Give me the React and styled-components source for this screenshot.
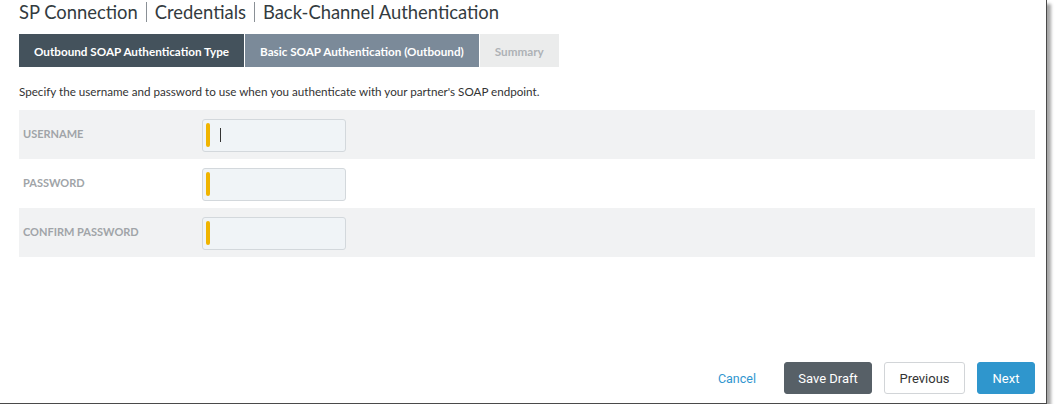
import React from "react";
import styled, { createGlobalStyle } from "styled-components";

const GlobalStyle = createGlobalStyle`
  body {
    margin: 0;
    background: #ffffff;
    font-family: "Lato", "Liberation Sans", sans-serif;
  }
`;

const Frame = styled.div`
  width: 1047px;
  height: 404px;
  box-sizing: border-box;
  background: #ffffff;
  border-right: 1px solid #4a4a4a;
  border-bottom: 1px solid #4a4a4a;
  box-shadow: 4px 4px 3px rgba(0, 0, 0, 0.35);
  display: flex;
  flex-direction: column;
  padding: 0 11px 0 19px;
`;

const Title = styled.h1`
  margin: 0;
  font-size: 18.4px;
  font-weight: 400;
  color: #333b40;
  line-height: 24px;
  display: flex;
  align-items: center;
`;

const Divider = styled.span`
  display: inline-block;
  width: 1px;
  height: 20px;
  background: #8a9096;
  margin: 0 8px;
`;

const Tabs = styled.div`
  display: flex;
  margin-top: 10px;
  gap: 1px;
`;

const Tab = styled.div`
  height: 33px;
  display: flex;
  align-items: center;
  padding: 0 15px;
  font-size: 11.7px;
  font-weight: 700;
  color: ${(p) => (p.state === "next" ? "#aeb2b6" : "#ffffff")};
  background: ${(p) =>
    p.state === "done" ? "#44525c" : p.state === "active" ? "#7b8a99" : "#ebecec"};
`;

const Intro = styled.p`
  margin: 17px 0 10px 0;
  font-size: 11.65px;
  color: #333333;
  line-height: 16px;
`;

const Form = styled.div`
  display: flex;
  flex-direction: column;
`;

const Row = styled.div`
  height: 49px;
  display: flex;
  align-items: center;
  background: ${(p) => (p.shaded ? "#f1f2f3" : "#ffffff")};
`;

const Label = styled.div`
  width: 179px;
  padding-left: 4px;
  font-size: 11px;
  font-weight: 700;
  color: #a0a4a8;
  margin-top: -2px;
`;

const Field = styled.div`
  width: 144px;
  height: 33px;
  box-sizing: border-box;
  border: 1px solid #d3d8dc;
  border-radius: 3px;
  background: #f0f4f7;
  display: flex;
  align-items: center;
  padding-left: 3px;
  gap: 10px;
  margin-top: 1px;
`;

const Required = styled.span`
  width: 4px;
  height: 24px;
  border-radius: 2px;
  background: #f0b400;
`;

const Caret = styled.span`
  width: 1px;
  height: 14px;
  background: #333333;
`;

const Footer = styled.div`
  margin-top: auto;
  margin-bottom: 9px;
  display: flex;
  justify-content: flex-end;
  align-items: center;
  gap: 12px;
  font-family: "Roboto", "Liberation Sans", sans-serif;
`;

const LinkButton = styled.button`
  border: none;
  background: none;
  color: #2f96cf;
  font-family: inherit;
  font-size: 12.5px;
  padding: 0;
  margin-right: 16px;
  cursor: pointer;
`;

const Button = styled.button`
  height: 32px;
  width: ${(p) => p.w}px;
  padding: 0;
  border-radius: 3px;
  font-family: inherit;
  font-size: 13px;
  cursor: pointer;
  border: 1px solid
    ${(p) => (p.kind === "dark" ? "#576067" : p.kind === "primary" ? "#2f96cd" : "#d2d5d8")};
  background: ${(p) =>
    p.kind === "dark" ? "#576067" : p.kind === "primary" ? "#2f96cd" : "#ffffff"};
  color: ${(p) => (p.kind === "plain" ? "#333333" : "#ffffff")};
`;

const fields = ["USERNAME", "PASSWORD", "CONFIRM PASSWORD"];

export default function App() {
  return (
    <>
      <GlobalStyle />
      <Frame>
        <Title>
          SP Connection<Divider />Credentials<Divider />Back-Channel Authentication
        </Title>
        <Tabs>
          <Tab state="done">Outbound SOAP Authentication Type</Tab>
          <Tab state="active">Basic SOAP Authentication (Outbound)</Tab>
          <Tab state="next">Summary</Tab>
        </Tabs>
        <Intro>
          Specify the username and password to use when you authenticate with your
          partner's SOAP endpoint.
        </Intro>
        <Form>
          {fields.map((f, i) => (
            <Row key={f} shaded={i % 2 === 0}>
              <Label>{f}</Label>
              <Field>
                <Required />
                {i === 0 && <Caret />}
              </Field>
            </Row>
          ))}
        </Form>
        <Footer>
          <LinkButton>Cancel</LinkButton>
          <Button kind="dark" w={88}>Save Draft</Button>
          <Button kind="plain" w={81}>Previous</Button>
          <Button kind="primary" w={58}>Next</Button>
        </Footer>
      </Frame>
    </>
  );
}
